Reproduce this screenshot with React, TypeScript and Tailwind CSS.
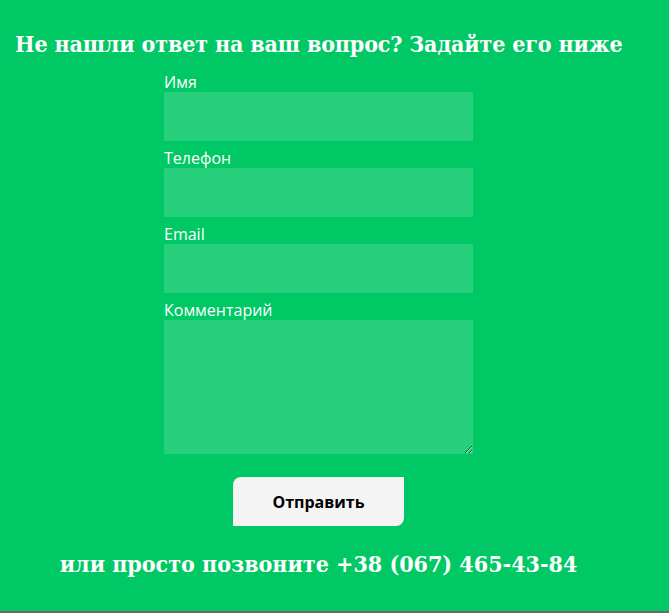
export default function App() {
  const serif = { fontFamily: '"DejaVu Serif Condensed", "DejaVu Serif", serif' };
  const fields = [
    { label: 'Имя', type: 'text' },
    { label: 'Телефон', type: 'tel' },
    { label: 'Email', type: 'email' },
  ];

  return (
    <div className="w-[669px] h-[613px] bg-[#6b6b6b]">
      <div className="h-[611px] bg-[#00c864] flex flex-col text-white">
        <h2
          className="mt-[29px] pl-[15px] text-[23px] leading-[30px] font-bold tracking-[-0.14px] whitespace-nowrap"
          style={serif}
        >
          Не нашли ответ на ваш вопрос? Задайте его ниже
        </h2>
        <div className="w-[309px] ml-[164px] flex flex-col items-center">
          <form
            className="mt-[14px] w-full flex flex-col"
            style={{ fontFamily: '"Open Sans", sans-serif' }}
            onSubmit={(e) => e.preventDefault()}
          >
            {fields.map((f) => (
              <label key={f.label} className="flex flex-col mb-[8px]">
                <span className="text-[16px] leading-[19px]">{f.label}</span>
                <input type={f.type} className="h-[49px] bg-[#28cf7c] outline-none px-3 text-white" />
              </label>
            ))}
            <label className="flex flex-col">
              <span className="text-[16px] leading-[19px]">Комментарий</span>
              <textarea className="h-[134px] bg-[#28cf7c] outline-none px-3 py-2 text-white resize" />
            </label>
            <button
              type="submit"
              className="mt-[23px] self-center w-[171px] h-[49px] bg-[#f4f4f4] text-black text-[16px] font-bold rounded-tl-[8px] rounded-br-[8px]"
            >
              Отправить
            </button>
          </form>
          <p className="mt-[23px] whitespace-nowrap text-[23px] leading-[30px] font-bold" style={serif}>
            или просто позвоните +38 (067) 465-43-84
          </p>
        </div>
      </div>
    </div>
  );
}
